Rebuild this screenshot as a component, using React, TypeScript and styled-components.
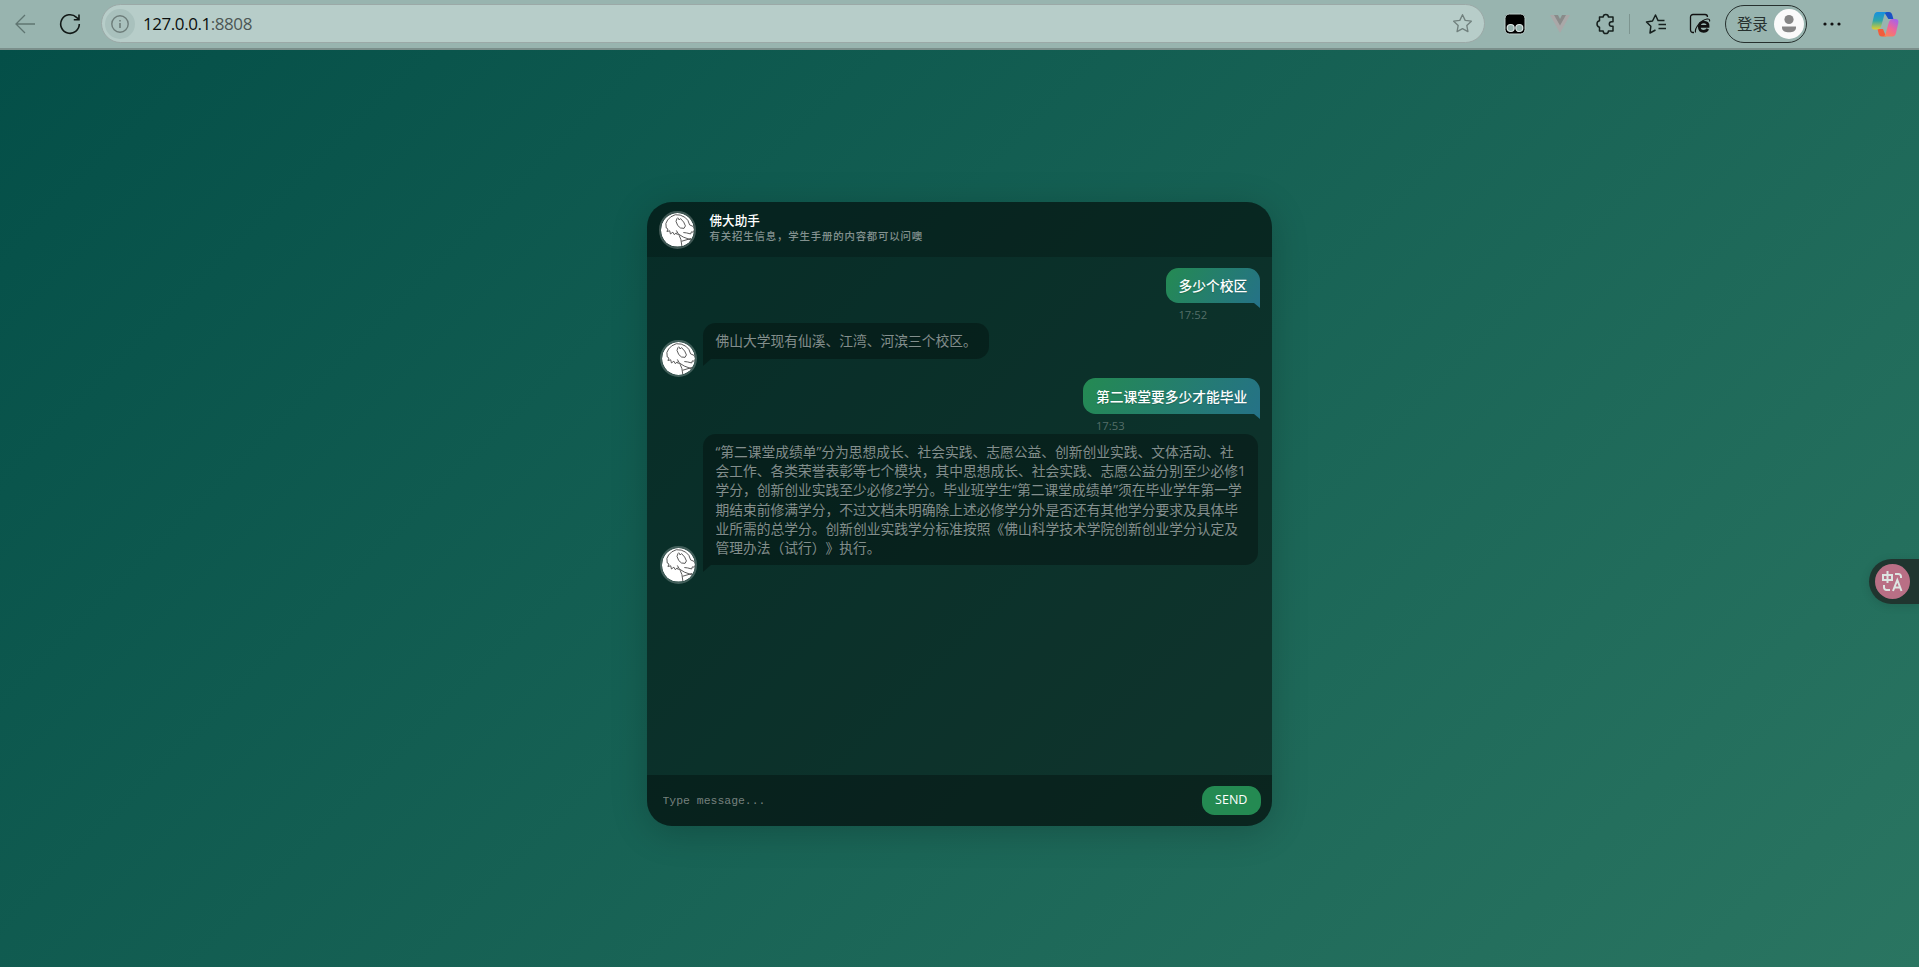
import React from "react";
import styled, { createGlobalStyle, css } from "styled-components";

const GlobalStyle = createGlobalStyle`
  * { box-sizing: border-box; }
  body { margin: 0; overflow: hidden; }
  body, button, input { font-family: "Open Sans", "Noto Sans CJK SC", sans-serif; }
`;

const Page = styled.div`
  display: flex;
  flex-direction: column;
  height: 100vh;
`;

/* Browser toolbar */

const Toolbar = styled.header`
  display: flex;
  align-items: center;
  flex: none;
  height: 50px;
  padding: 0 18px 1px 14px;
  background: #98b4af;
  border-bottom: 2px solid #7b8f8b;
`;

const AddressBar = styled.div`
  display: flex;
  align-items: center;
  width: 1384px;
  height: 39px;
  margin-left: 20px;
  flex: none;
  padding: 0 10px 0 3px;
  border: 1px solid #9ba9a7;
  border-radius: 20px;
  background: #b7cdc9;
`;

const SiteInfo = styled.span`
  display: grid;
  place-items: center;
  width: 30px;
  height: 30px;
  border-radius: 50%;
  background: #a9c1bd;
`;

const Url = styled.span`
  flex: 1;
  margin-left: 8px;
  font-size: 17px;
  letter-spacing: -0.44px;
  color: #4c5755;
  b { font-weight: 400; color: #0b0f0e; }
`;

const Slot = styled.span<{ $w: number; $ml?: number }>`
  display: grid;
  place-items: center;
  flex: none;
  width: ${(p) => p.$w}px;
  height: 30px;
  margin-left: ${(p) => p.$ml ?? 0}px;
  svg { display: block; }
`;

const Divider = styled.span`
  flex: none;
  width: 1px;
  height: 20px;
  margin-left: 12px;
  background: #7d9590;
`;

const Login = styled.div`
  display: flex;
  align-items: center;
  justify-content: space-between;
  flex: none;
  width: 82px;
  height: 38px;
  margin-left: 14px;
  padding: 0 2px 0 11px;
  border: 1.5px solid #26302e;
  border-radius: 19px;
  font-size: 15.5px;
  letter-spacing: -0.2px;
  white-space: nowrap;
  color: #26302e;
`;

/* Chat */

const Main = styled.main`
  display: flex;
  justify-content: center;
  align-items: flex-start;
  flex: 1;
  padding-top: 151.5px;
  background: linear-gradient(135deg, #044f48, #2a7561);
`;

const Chat = styled.section`
  display: flex;
  flex-direction: column;
  width: 625px;
  height: 624.5px;
  overflow: hidden;
  border-radius: 25px;
  background: rgba(0, 0, 0, 0.5);
  box-shadow: 0 6px 37px rgba(0, 0, 0, 0.2);
`;

const ChatHeader = styled.div`
  display: flex;
  flex: none;
  height: 55.25px;
  padding: 9.75px 12px 0 11.5px;
  background: rgba(0, 0, 0, 0.2);
`;

const Avatar = styled.span`
  display: block;
  flex: none;
  width: 37.5px;
  height: 37.5px;
  overflow: hidden;
  border: 2.5px solid rgba(255, 255, 255, 0.24);
  border-radius: 50%;
  svg { display: block; width: 100%; height: 100%; border-radius: 50%; }
`;

const Titles = styled.div`
  margin: 1px 0 0 13.5px;
`;

const Title = styled.h1`
  margin: 0;
  font-size: 12.6px;
  line-height: 17px;
  font-weight: 500;
  color: #fff;
`;

const Subtitle = styled.h2`
  margin: 0;
  font-size: 10.4px;
  line-height: 14px;
  font-weight: 500;
  letter-spacing: 0.85px;
  color: rgba(255, 255, 255, 0.5);
`;

const Messages = styled.div`
  display: flex;
  flex-direction: column;
  gap: 19.8px;
  flex: 1;
  padding: 11.1px 12.5px 0;
`;

const Row = styled.div<{ $own?: boolean }>`
  display: flex;
  align-items: flex-end;
  justify-content: ${(p) => (p.$own ? "flex-end" : "flex-start")};
  ${Avatar} { margin: 0 6px -18.5px 0; }
`;

const Bubble = styled.div<{ $own?: boolean }>`
  position: relative;
  padding: 8.25px 12.3px 8px 12.5px;
  font-size: 13.75px;
  line-height: 19.25px;
  white-space: nowrap;
  text-spacing-trim: space-all;
  text-shadow: 0 1px 1px rgba(0, 0, 0, 0.2);
  &::before {
    content: "";
    position: absolute;
    top: 100%;
    border-right: 8.75px solid transparent;
  }
  ${(p) =>
    p.$own
      ? css`
          color: #fff;
          font-weight: 500;
          border-radius: 12.5px 12.5px 0 12.5px;
          background: linear-gradient(120deg, #248a52, #257287);
          &::before {
            right: 0;
            border-right: 0;
            border-left: 6.5px solid transparent;
            border-top: 5px solid #257287;
          }
        `
      : css`
          color: rgba(255, 255, 255, 0.5);
          border-radius: 12.5px 12.5px 12.5px 0;
          background: rgba(0, 0, 0, 0.3);
          &::before {
            left: 0;
            border-top: 7px solid rgba(0, 0, 0, 0.3);
          }
        `}
`;

const Line = styled.div``;

const Timestamp = styled.time`
  position: absolute;
  left: 12.5px;
  top: calc(100% + 4px);
  font-size: 11.25px;
  line-height: 15px;
  font-weight: 400;
  text-shadow: none;
  color: rgba(255, 255, 255, 0.3);
`;

const Composer = styled.form`
  display: flex;
  align-items: center;
  justify-content: space-between;
  flex: none;
  height: 51px;
  padding: 0 11.5px 0 15.5px;
  background: rgba(0, 0, 0, 0.3);
`;

const MessageInput = styled.input`
  width: 400px;
  padding: 0;
  border: 0;
  outline: 0;
  background: none;
  font-family: "Liberation Mono", monospace;
  font-size: 11.45px;
  color: #aaa;
  &::placeholder { color: #75807d; opacity: 1; }
`;

const SendButton = styled.button`
  width: 58.5px;
  height: 28.5px;
  padding: 0;
  border: 0;
  border-radius: 12.5px;
  background: #248a52;
  font-size: 12.5px;
  line-height: 1;
  color: #fff;
`;

/* Translate tab docked over the right edge of the page */
const TranslateTab = styled.div`
  position: fixed;
  right: 0;
  top: 559px;
  display: flex;
  align-items: center;
  width: 50px;
  height: 45px;
  padding-left: 6px;
  border-radius: 23px 0 0 23px;
  background: #20352f;
  box-shadow: 0 2px 10px rgba(0, 0, 0, 0.12);
`;

const Face = () => (
  <Avatar>
    <svg viewBox="18 27 96 96" fill="none" stroke="#4a4a4a" strokeWidth="2.6" strokeLinejoin="round">
      <rect x="18" y="27" width="96" height="96" fill="#fff" stroke="none" />
      <path d="M37 47l9-9 13-6 14 1 13 6 9 9 5 13 9 4 5 8-3 9-6-1-2 6-12-3-9-1" />
      <path d="M64 42l-3 9 5 12 8 7 10 1 4-7-5-11-9-10-4 4-4-7" />
      <path d="M37 47l-5 10 1 13 5 3-3 7 8-2 2 9 7-5 4 7 6-5 3 6" />
      <path d="M62 77l8 14 5 12 3 20M69 88l13 8 27 10M77 108l27-8" />
    </svg>
  </Avatar>
);

const replyShort = ["佛山大学现有仙溪、江湾、河滨三个校区。"];

const replyLong = [
  "“第二课堂成绩单”分为思想成长、社会实践、志愿公益、创新创业实践、文体活动、社",
  "会工作、各类荣誉表彰等七个模块，其中思想成长、社会实践、志愿公益分别至少必修1",
  "学分，创新创业实践至少必修2学分。毕业班学生“第二课堂成绩单”须在毕业学年第一学",
  "期结束前修满学分，不过文档未明确除上述必修学分外是否还有其他学分要求及具体毕",
  "业所需的总学分。创新创业实践学分标准按照《佛山科学技术学院创新创业学分认定及",
  "管理办法（试行）》执行。",
];

const Question = ({ text, time }: { text: string; time: string }) => (
  <Row $own>
    <Bubble $own>
      {text}
      <Timestamp>{time}</Timestamp>
    </Bubble>
  </Row>
);

const Reply = ({ lines }: { lines: string[] }) => (
  <Row>
    <Face />
    <Bubble>
      {lines.map((l) => (
        <Line key={l}>{l}</Line>
      ))}
    </Bubble>
  </Row>
);

const starPath =
  "M12 2.800l2.800 5.900 6.400.85-4.700 4.500 1.150 6.400L12 17.350 6.350 20.450l1.150-6.400-4.700-4.500 6.400-.85z";

const BrowserBar = () => (
  <Toolbar>
    <Slot $w={22}>
      <svg width="22" height="22" viewBox="0 0 22 22" fill="none" stroke="#5f7571" strokeWidth="1.3">
        <path d="M21 11H2M11 2L2 11l9 9" />
      </svg>
    </Slot>
    <Slot $w={22} $ml={23}>
      <svg width="22" height="22" viewBox="0 0 22 22" fill="none" stroke="#111816" strokeWidth="1.6">
        <path d="M20.300 11a9.300 9.300 0 1 1-2.800-6.650L20 6.500M20 1.500v5.200h-5.200" />
      </svg>
    </Slot>
    <AddressBar>
      <SiteInfo>
        <svg width="20" height="20" viewBox="0 0 20 20" fill="none" stroke="#6d7d7a" strokeWidth="1.4">
          <circle cx="10" cy="10" r="8.200" />
          <path d="M10 9v5M10 6v1.600" strokeWidth="1.600" />
        </svg>
      </SiteInfo>
      <Url><b>127.0.0.1</b>:8808</Url>
      <Slot $w={24}>
        <svg width="23" height="23" viewBox="0 0 24 24" fill="none" stroke="#71817e" strokeWidth="1.4" strokeLinejoin="round">
          <path d={starPath} />
        </svg>
      </Slot>
    </AddressBar>
    <Slot $w={22} $ml={19}>
      <svg width="22" height="22" viewBox="0 0 22 22">
        <rect x="1" y="1" width="20" height="20" rx="4.500" fill="#000" stroke="#bccdca" />
        <circle cx="6.700" cy="15" r="3.500" fill="#98b4af" stroke="#dce6e4" strokeWidth="1.200" />
        <circle cx="15.300" cy="15" r="3.500" fill="#98b4af" stroke="#dce6e4" strokeWidth="1.200" />
      </svg>
    </Slot>
    <Slot $w={20} $ml={24}>
      <svg width="20" height="18" viewBox="0 0 20 18">
        <path d="M0 0h5l5 9 5-9h5L10 18z" fill="#aaa8a8" />
        <path d="M4 0h4l2 4 2-4h4l-6 10.500z" fill="#898b8a" />
      </svg>
    </Slot>
    <Slot $w={22} $ml={25}>
      <svg width="22" height="22" viewBox="0 0 22 22" fill="none" stroke="#16201e" strokeWidth="1.5" strokeLinejoin="round">
        <path d="M4.500 4h3.700a2.600 2.600 0 0 1 5.200 0H18v4.700h-1.400a2.300 2.300 0 0 0 0 4.600H18V18h-4.600a2.600 2.600 0 0 1-5.200 0H4.500v-3.800a3.300 3.300 0 0 1 0-6.400z" />
      </svg>
    </Slot>
    <Divider />
    <Slot $w={22} $ml={15}>
      <svg width="22" height="22" viewBox="0 0 22 22" fill="none" stroke="#16201e" strokeWidth="1.500" strokeLinejoin="round">
        <path d="M13 7.500L10.500 2 7.500 8l-6 1 4.300 4.300L5 20l5.500-3M12.500 7.500h7M13.500 11.500H21M13.500 15.500H21" />
      </svg>
    </Slot>
    <Slot $w={22} $ml={22}>
      <svg width="22" height="22" viewBox="0 0 22 22" fill="none" stroke="#111">
        <path d="M5 19.500H4a2.500 2.500 0 0 1-2.500-2.500V4A2.500 2.500 0 0 1 4 1.500h12A2.500 2.500 0 0 1 18.500 4" strokeWidth="1.300" />
        <path d="M18.800 15.800c-.9 1.700-2.300 2.500-4.200 2.500-2.900 0-4.300-1.800-4.300-4.600 0-2.900 1.800-4.700 4.500-4.700 3 0 4.500 1.900 4.300 4.300H11" strokeWidth="2.700" />
        <path d="M6.500 19.500C5.500 15 12 7 18 6c2.500-.3 3 .8 2.500 2.500" strokeWidth="1.100" />
      </svg>
    </Slot>
    <Login>
      登录
      <svg width="30" height="30" viewBox="0 0 30 30">
        <circle cx="15" cy="15" r="15" fill="#fafafa" />
        <circle cx="15" cy="10.500" r="4.600" fill="#858585" />
        <path d="M8 17.500h14v1.200c0 3-3 4.600-7 4.600s-7-1.600-7-4.600z" fill="#858585" />
      </svg>
    </Login>
    <Slot $w={20} $ml={15}>
      <svg width="20" height="6" viewBox="0 0 20 6" fill="#111">
        <circle cx="3" cy="3" r="1.600" />
        <circle cx="10" cy="3" r="1.600" />
        <circle cx="17" cy="3" r="1.600" />
      </svg>
    </Slot>
    <Slot $w={28} $ml={29}>
      <svg width="28" height="26" viewBox="0 0 28 26">
        <defs>
          <linearGradient id="cpA" x1="0" y1="0" x2="0" y2="1">
            <stop offset="0" stopColor="#168fe0" />
            <stop offset=".5" stopColor="#31a6a8" />
            <stop offset="1" stopColor="#e2cf2c" />
          </linearGradient>
          <linearGradient id="cpB" x1=".8" y1="0" x2=".2" y2="1">
            <stop offset="0" stopColor="#a662ec" />
            <stop offset=".5" stopColor="#ed6599" />
            <stop offset="1" stopColor="#fb8453" />
          </linearGradient>
        </defs>
        <path d="M13 1h5c2 0 2.800 1.500 3.400 3.500l1 3.500h-5z" fill="#1b52c4" />
        <path d="M15 25.500h-4c-2.500 0-3-1.500-3.500-3.500L6.500 18H12z" fill="#f25d3c" />
        <path d="M6.500 1H16c-2 .5-2.500 2-3 4l-2.500 9c-.8 3-2 4.500-4.500 4.500H3.500C1 18.500 0 16.500.8 14L3 4.500C3.600 2.300 4.500 1 6.500 1z" fill="url(#cpA)" />
        <path d="M21.500 25.500H12c2-.5 2.500-2 3-4l2.500-9C18.300 9.500 19.500 8 22 8h2.500c2.500 0 3.500 2 2.700 4.500L25 22c-.6 2.200-1.500 3.500-3.500 3.500z" fill="url(#cpB)" />
      </svg>
    </Slot>
  </Toolbar>
);

export default function App() {
  return (
    <Page>
      <GlobalStyle />
      <BrowserBar />
      <Main>
        <Chat>
          <ChatHeader>
            <Face />
            <Titles>
              <Title>佛大助手</Title>
              <Subtitle>有关招生信息，学生手册的内容都可以问噢</Subtitle>
            </Titles>
          </ChatHeader>
          <Messages>
            <Question text="多少个校区" time="17:52" />
            <Reply lines={replyShort} />
            <Question text="第二课堂要多少才能毕业" time="17:53" />
            <Reply lines={replyLong} />
          </Messages>
          <Composer>
            <MessageInput placeholder="Type message..." />
            <SendButton type="button">SEND</SendButton>
          </Composer>
        </Chat>
      </Main>
      <TranslateTab>
        <svg width="35" height="35" viewBox="0 0 35 35" fill="none" stroke="#dde5e2" strokeWidth="2">
          <circle cx="17.500" cy="17.500" r="17.500" fill="#b96f85" stroke="none" />
          <path d="M8 11h9v5H8zM12.500 7v12M20 10h3.500a2.500 2.500 0 0 1 2.500 2.500V14M9 21v2.500A2.500 2.500 0 0 0 11.500 26H15M18 27l4.300-11L26.500 27M19.500 23.500h6" />
        </svg>
      </TranslateTab>
    </Page>
  );
}
